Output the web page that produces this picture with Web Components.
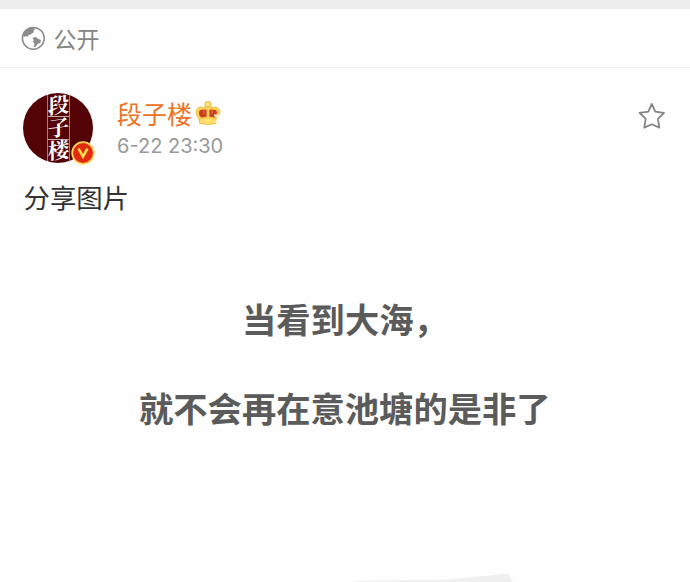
<!DOCTYPE html>
<html lang="zh-CN">
<head>
    <meta charset="UTF-8">
    <meta name="viewport" content="width=device-width, initial-scale=1.0">
    <title>公开</title>
    <style>
        body {
            margin: 0;
            background: #fefefe;
            font-family: "Noto Sans CJK SC", sans-serif;
            overflow: hidden;
        }
    </style>
</head>
<body>
    <weibo-card>
        <visibility-bar slot="bar">公开</visibility-bar>
        <post-header slot="header">
            <user-avatar slot="avatar">段子楼</user-avatar>
            <span slot="name">段子楼</span>
            <span slot="time">6-22 23:30</span>
        </post-header>
        <span slot="text">分享图片</span>
        <quote-picture slot="picture">
            <span slot="first">当看到大海，</span>
            <span slot="second">就不会再在意池塘的是非了</span>
        </quote-picture>
    </weibo-card>
    <script>
        // attach an open shadow root with the given markup
        class BaseElement extends HTMLElement {
            constructor() {
                super();
                this.attachShadow({ mode: 'open' });
                this.shadowRoot.innerHTML = this.render();
            }
        }

        class WeiboCard extends BaseElement {
            render() {
                return `
                    <style>
                        :host {
                            display: flex;
                            flex-direction: column;
                            height: 582px;
                            box-sizing: border-box;
                            border-top: 9px solid #ededed;
                        }
                        .text {
                            height: 41px;
                            padding: 14px 24px 0 23.5px;
                            font-size: 26.4px;
                            line-height: 39px;
                            color: #333;
                        }
                    </style>
                    <slot name="bar"></slot>
                    <slot name="header"></slot>
                    <div class="text"><slot name="text"></slot></div>
                    <slot name="picture"></slot>
                `;
            }
        }
        customElements.define('weibo-card', WeiboCard);

        class VisibilityBar extends BaseElement {
            render() {
                return `
                    <style>
                        :host {
                            display: flex;
                            align-items: center;
                            gap: 7.5px;
                            height: 58px;
                            padding-left: 21px;
                            border-bottom: 1px solid #f0f0f0;
                            font-size: 23px;
                            line-height: 34px;
                            color: #858585;
                        }
                        svg { display: block; }
                    </style>
                    <svg width="25" height="25" viewBox="0 0 25 25">
                        <circle cx="12.3" cy="12.3" r="10.9" fill="none" stroke="#8c8c8c" stroke-width="1.5"/>
                        <path fill="#8c8c8c" d="M2 9C3 5 7 1.5 12 1.4L14 3L12.5 5L12.8 6.3L10 8L9 9.2L7.8 8.6L6.8 10.6L4.5 10.2L3.6 11Z"/>
                        <path fill="#8c8c8c" d="M11.4 11.8L14.8 11L17 12.8L20 14L19.2 17L16.8 17.8L14.5 20.7L12.3 21.3L13.6 18L12 15.8L12.8 13.8Z"/>
                    </svg>
                    <slot></slot>
                `;
            }
        }
        customElements.define('visibility-bar', VisibilityBar);

        class UserAvatar extends BaseElement {
            render() {
                return `
                    <style>
                        :host {
                            display: block;
                            position: relative;
                            width: 70px;
                            height: 70px;
                        }
                        .disc {
                            display: flex;
                            justify-content: center;
                            height: 70px;
                            border-radius: 50%;
                            /* frame lines of the three cells */
                            background:
                                linear-gradient(#a77b78, #a77b78) 24px 0 / 1px 100% no-repeat,
                                linear-gradient(#a77b78, #a77b78) 46px 0 / 1px 100% no-repeat,
                                linear-gradient(#c9aaa8, #c9aaa8) 24px 23px / 22px 1px no-repeat,
                                linear-gradient(#c9aaa8, #c9aaa8) 24px 46px / 22px 1px no-repeat,
                                #530305;
                        }
                        .strip {
                            writing-mode: vertical-rl;
                            padding-top: 1px;
                            font-family: "Noto Serif CJK SC", "Noto Sans CJK SC", serif;
                            font-size: 21.5px;
                            font-weight: 700;
                            letter-spacing: 1.2px;
                            line-height: 24px;
                            color: #fff;
                            white-space: nowrap;
                            transform: skewY(-7deg);
                        }
                        .badge {
                            position: absolute;
                            left: 48px;
                            top: 48px;
                        }
                    </style>
                    <div class="disc"><div class="strip"><slot></slot></div></div>
                    <svg class="badge" width="24" height="24" viewBox="0 0 24 24">
                        <circle cx="12" cy="12" r="10.8" fill="#e12a10" stroke="#ffd65c" stroke-width="1.8"/>
                        <path d="M7.6 7.6L12 15.6L16.4 7.6" fill="none" stroke="#ffe14a" stroke-width="2.5"/>
                    </svg>
                `;
            }
        }
        customElements.define('user-avatar', UserAvatar);

        class PostHeader extends BaseElement {
            render() {
                return `
                    <style>
                        :host {
                            display: flex;
                            height: 70px;
                            padding: 25px 24px 0 23px;
                        }
                        .info {
                            display: flex;
                            flex-direction: column;
                            flex: 1;
                            padding: 2px 0 0 24px;
                        }
                        .name {
                            display: flex;
                            gap: 3px;
                            height: 37px;
                            font-size: 25px;
                            line-height: 36px;
                            color: #eb7323;
                        }
                        .time {
                            font-family: Inter, "Liberation Sans", sans-serif;
                            font-size: 20px;
                            line-height: 28px;
                            color: #999;
                        }
                        .crown { margin-top: 5px; }
                        .star { margin-top: 9px; }
                        svg { display: block; }
                    </style>
                    <slot name="avatar"></slot>
                    <div class="info">
                        <div class="name">
                            <slot name="name"></slot>
                            <svg class="crown" width="26" height="27" viewBox="0 0 26 27">
                                <circle cx="13" cy="4.6" r="2.8" fill="#fdeaa8" stroke="#f3c544" stroke-width="1.6"/>
                                <path d="M4.6 19.5C2 16.5 .8 13.5 1.2 11C2 7.5 5.6 6.6 8.4 7.4Q13 5.4 17.6 7.4C20.4 6.6 24 7.5 24.8 11C25.2 13.5 24 16.5 21.4 19.5Z" fill="#fbd45a" stroke="#f0bf3f"/>
                                <path d="M6.2 17.6C3.2 14.6 3.2 10 6.6 9.7Q9.4 9.2 11.6 9.8V16.8Q8.8 17 6.2 17.6Z" fill="#c93a20"/>
                                <path d="M19.8 17.6C22.8 14.6 22.8 10 19.4 9.7Q16.6 9.2 14.4 9.8V16.8Q17.2 17 19.8 17.6Z" fill="#c93a20"/>
                                <path d="M9.2 9.4Q8.2 12 9.2 14.2M16.8 9.4Q17.8 12 16.8 14.2" fill="none" stroke="#e98a3c" stroke-width="1"/>
                                <path d="M4.2 19Q13 16.4 21.8 19L21.2 23.4Q13 25.6 4.8 23.4Z" fill="#ffe06c" stroke="#f0bf3f"/>
                                <path d="M19 15.5H23.6L21 23" fill="none" stroke="#fff6d6" stroke-width="1.8"/>
                            </svg>
                        </div>
                        <div class="time"><slot name="time"></slot></div>
                    </div>
                    <svg class="star" width="28" height="29" viewBox="0 0 28 29">
                        <path d="M13.8 2L17.3 9.6L26 10.8L19.9 16.8L21.3 25.6L13.8 22.2L6.3 25.6L7.7 16.8L1.6 10.8L10.3 9.6Z" fill="none" stroke="#858585" stroke-width="1.8" stroke-linejoin="round"/>
                    </svg>
                `;
            }
        }
        customElements.define('post-header', PostHeader);

        class QuotePicture extends BaseElement {
            render() {
                return `
                    <style>
                        :host {
                            display: flex;
                            flex-direction: column;
                            flex: 1;
                            padding: 75px 0 0 139px;
                            font-size: 34.3px;
                            font-weight: 700;
                            line-height: 50px;
                            color: #5b5b5b;
                            white-space: nowrap;
                        }
                        .first {
                            margin-left: 103px;
                            margin-bottom: 39px;
                        }
                        svg {
                            display: block;
                            margin: auto 0 0 213px;
                        }
                    </style>
                    <div class="first"><slot name="first"></slot></div>
                    <div><slot name="second"></slot></div>
                    <!-- top edge of the drawing under the words -->
                    <svg width="164" height="9" viewBox="0 0 164 9">
                        <path d="M0 9L8 8L95 6.5L156 .8L161 9Z" fill="#f0f0f0"/>
                    </svg>
                `;
            }
        }
        customElements.define('quote-picture', QuotePicture);
    </script>
</body>
</html>
